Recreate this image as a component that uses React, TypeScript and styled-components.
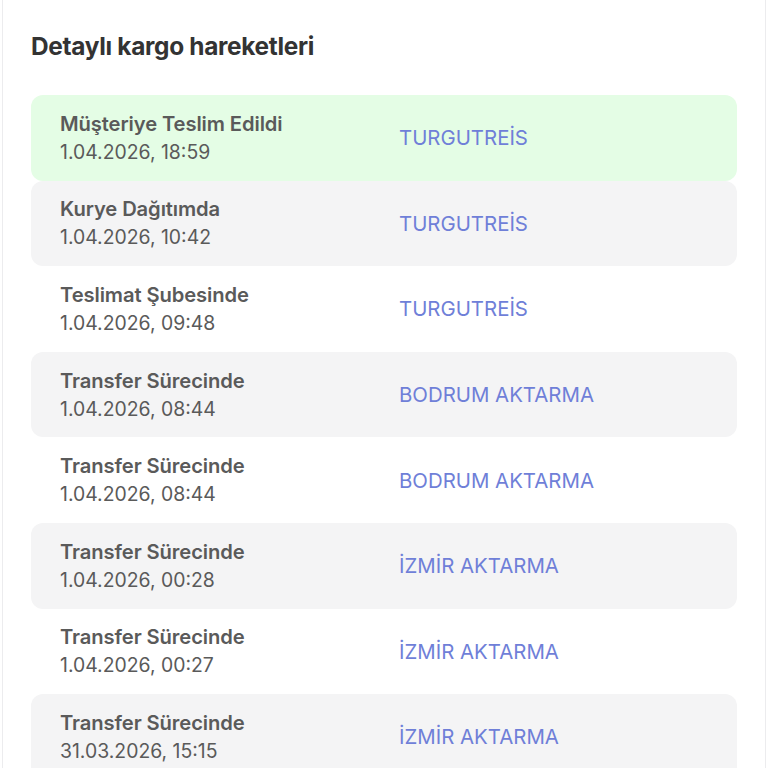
import React from 'react';
import styled, { createGlobalStyle } from 'styled-components';

type Movement = {
  status: string;
  date: string;
  place: string;
  delivered?: boolean;
};

const movements: Movement[] = [
  { status: 'Müşteriye Teslim Edildi', date: '1.04.2026, 18:59', place: 'TURGUTREİS', delivered: true },
  { status: 'Kurye Dağıtımda', date: '1.04.2026, 10:42', place: 'TURGUTREİS' },
  { status: 'Teslimat Şubesinde', date: '1.04.2026, 09:48', place: 'TURGUTREİS' },
  { status: 'Transfer Sürecinde', date: '1.04.2026, 08:44', place: 'BODRUM AKTARMA' },
  { status: 'Transfer Sürecinde', date: '1.04.2026, 08:44', place: 'BODRUM AKTARMA' },
  { status: 'Transfer Sürecinde', date: '1.04.2026, 00:28', place: 'İZMİR AKTARMA' },
  { status: 'Transfer Sürecinde', date: '1.04.2026, 00:27', place: 'İZMİR AKTARMA' },
  { status: 'Transfer Sürecinde', date: '31.03.2026, 15:15', place: 'İZMİR AKTARMA' },
];

const GlobalStyle = createGlobalStyle`
  html, body {
    margin: 0;
    padding: 0;
    background: #ffffff;
    font-family: Inter, "Noto Sans", "Liberation Sans", sans-serif;
  }
`;

const App = () => {
  return (
    <>
      <GlobalStyle />
      <Panel>
        <Title>Detaylı kargo hareketleri</Title>
        <List>
          {movements.map((m, i) => (
            <Row key={i} $tone={m.delivered ? 'green' : i % 2 === 1 ? 'gray' : 'white'}>
              <Info>
                <Status>{m.status}</Status>
                <When>{m.date}</When>
              </Info>
              <Place>{m.place}</Place>
            </Row>
          ))}
        </List>
      </Panel>
    </>
  );
};

const Panel = styled.section`
  margin: 0 2px;
  height: 768px;
  overflow: hidden;
  box-sizing: border-box;
  border-left: 1px solid #ececee;
  border-right: 1px solid #ececee;
  padding: 31px 28px 0;
`;

const Title = styled.h2`
  margin: 0 0 34px;
  font-size: 24.4px;
  font-weight: 700;
  color: #333333;
  letter-spacing: -0.3px;
  line-height: 30px;
`;

const List = styled.ul`
  list-style: none;
  margin: 0;
  padding: 0;
  display: flex;
  flex-direction: column;
`;

const tones = {
  green: '#e4fde5',
  gray: '#f4f4f5',
  white: '#ffffff',
};

const Row = styled.li<{ $tone: keyof typeof tones }>`
  display: grid;
  grid-template-columns: 339px 1fr;
  align-items: center;
  height: 85.6px;
  box-sizing: border-box;
  padding: 0 29px;
  border-radius: 12px;
  background: ${(p) => tones[p.$tone]};
`;

const Info = styled.div`
  display: flex;
  flex-direction: column;
`;

const Status = styled.span`
  font-size: 20.2px;
  font-weight: 600;
  color: #5a5a5a;
  letter-spacing: -0.1px;
  line-height: 29px;
`;

const When = styled.span`
  font-size: 19.4px;
  font-weight: 400;
  color: #5a5a5a;
  line-height: 29px;
`;

const Place = styled.span`
  font-size: 20.4px;
  color: #6f7fd8;
  line-height: 29px;
`;

export default App;
